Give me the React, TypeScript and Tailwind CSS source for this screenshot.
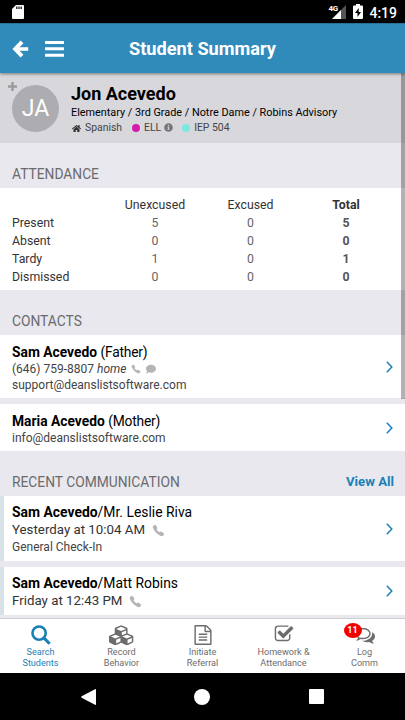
import { ReactNode } from "react"
import { FaComment, FaHome, FaInfoCircle } from "react-icons/fa"
import { IoCall } from "react-icons/io5"

interface Row {
    label: string
    unexcused: number
    excused: number
    total: number
}

const attendance: Row[] = [
    { label: "Present", unexcused: 5, excused: 0, total: 5 },
    { label: "Absent", unexcused: 0, excused: 0, total: 0 },
    { label: "Tardy", unexcused: 1, excused: 0, total: 1 },
    { label: "Dismissed", unexcused: 0, excused: 0, total: 0 },
]

function Chevron() {
    return (
        <svg className="h-3 w-[7px] shrink-0" viewBox="0 0 7 12" fill="none" stroke="#1a81b8" strokeWidth="1.5">
            <path d="M.8 .8 5.8 6 .8 11.2" />
        </svg>
    )
}

function StatusBar() {
    return (
        <div className="flex h-[23px] items-center bg-black pr-[8px] pl-[12px] text-white">
            <svg className="mt-px h-[14px] w-3" viewBox="0 0 12 14">
                <path d="M4 0h7q1 0 1 1v12q0 1-1 1H1q-1 0-1-1V4z" fill="#fff" />
                <path d="M4.8 1.5v2.6M7 1.5v2.6M9.2 1.5v2.6" stroke="#000" strokeWidth="1.2" />
            </svg>
            <div className="ml-auto flex items-center">
                <div className="relative mt-[1px] h-[14px] w-[18px]">
                    <svg className="h-full w-full" viewBox="0 0 18 14">
                        <path d="M18 0V14H4z" fill="#555" />
                        <path d="M13 5V14H4z" fill="#fff" />
                    </svg>
                    <span className="absolute top-0 left-0 bg-black text-[8px] leading-[7px] font-bold tracking-[-0.3px]">4G</span>
                </div>
                <svg className="ml-[7px] h-[15px] w-[10px]" viewBox="0 0 10 15">
                    <path d="M3 0h4v1.5h2q1 0 1 1V14q0 1-1 1H1q-1 0-1-1V2.5q0-1 1-1h2z" fill="#fff" />
                    <path d="M5.7 4 2 9h2.5v4L8 8H5.7z" fill="#000" />
                </svg>
                <span className="mt-[2px] ml-[6px] text-[14px] leading-none font-medium">4:19</span>
            </div>
        </div>
    )
}

function Header() {
    return (
        <div className="relative z-10 grid h-[50px] grid-cols-[1fr_auto_1fr] items-center border-t border-[#2c6f98] bg-[#318bba] px-[12px] text-white shadow-[0_1px_3px_rgba(0,0,0,0.45)]">
            <div className="flex items-center gap-[16px]">
                <svg className="h-[18px] w-[17px]" viewBox="0 0 17 18" fill="none" stroke="#fff" strokeWidth="4">
                    <path d="M4 9H16.2" strokeWidth="3.6" />
                    <path d="M10 1.8 3.2 9l6.8 7.2" />
                </svg>
                <svg className="h-4 w-[19px]" viewBox="0 0 19 16" fill="#fff">
                    <rect width="19" height="3" y="0" rx=".5" />
                    <rect width="19" height="3" y="6.3" rx=".5" />
                    <rect width="19" height="3" y="12.7" rx=".5" />
                </svg>
            </div>
            <h1 className="text-[18.2px] font-bold">Student Summary</h1>
        </div>
    )
}

function Profile() {
    return (
        <div className="flex h-[70px] bg-[#d8d7dc] pt-[12px] pl-[12px]">
            <div className="relative flex h-[47px] w-[47px] items-center justify-center rounded-full bg-[#adacb0] pt-[2px] text-[23px] text-white">
                JA
                <svg className="absolute -top-[3px] -left-[4px] h-[9px] w-[9px]" viewBox="0 0 9 9" stroke="#9b9b9d" strokeWidth="2.4">
                    <path d="M4.5 0v9M0 4.5h9" />
                </svg>
            </div>
            <div className="-mt-[3px] ml-[12px] text-black">
                <div className="text-[18px] leading-[24px] font-bold">Jon Acevedo</div>
                <div className="-mt-px text-[10.85px] leading-[15px]">Elementary / 3rd Grade / Notre Dame / Robins Advisory</div>
                <div className="flex items-center text-[10.4px] leading-[16px] text-[#444]">
                    <FaHome className="mr-[4px] ml-[1px] text-[#333]" size={9} />
                    <span>Spanish</span>
                    <span className="mr-[4px] ml-[10px] h-2 w-2 rounded-full bg-[#d81bb0]" />
                    <span>ELL</span>
                    <FaInfoCircle className="mb-px ml-[3px] text-[#777]" size={9} />
                    <span className="mr-[4px] ml-[9px] h-2 w-2 rounded-full bg-[#76ebe0]" />
                    <span>IEP 504</span>
                </div>
            </div>
        </div>
    )
}

function SectionTitle({ title, children }: { title: string; children?: ReactNode }) {
    return (
        <div className="flex h-[45px] items-end justify-between bg-[#e9e8ee] pr-[11px] pb-[5px] pl-[12px] text-[13.2px] leading-[19px] text-[#6b6b6d]">
            <h2 className="-mb-px text-[13.8px]">{title}</h2>
            {children}
        </div>
    )
}

function Attendance() {
    return (
        <div className="h-[102px] bg-white pt-[8px] pl-[12px] text-[12.3px] leading-[18px] text-[#333]">
            <div className="grid grid-cols-[95px_96px_95px_96px] text-center">
                <span />
                <span>Unexcused</span>
                <span>Excused</span>
                <span className="font-bold">Total</span>
            </div>
            {attendance.map((row) => (
                <div key={row.label} className="grid grid-cols-[95px_96px_95px_96px] text-center">
                    <span className="text-left">{row.label}</span>
                    <span className="text-[#666]">{row.unexcused}</span>
                    <span className="text-[#666]">{row.excused}</span>
                    <span className="font-bold text-[#555]">{row.total}</span>
                </div>
            ))}
        </div>
    )
}

function Card({ className, children }: { className: string; children: ReactNode }) {
    return (
        <div className={`flex items-center justify-between bg-white pr-[12px] ${className}`}>
            <div className="self-start pt-[7px]">{children}</div>
            <Chevron />
        </div>
    )
}

function CommCard({ className, to, date, note }: { className: string; to: string; date: string; note?: string }) {
    return (
        <Card className={`border-l-4 border-[#d6e2e5] pl-2 ${className}`}>
            <div className="text-[13.9px] leading-[18px] text-black"><b>Sam Acevedo</b>/{to}</div>
            <div className="flex items-center text-[13.3px] leading-[18px] text-[#333]">
                {date}
                <IoCall className="ml-[7px] text-[#b5b5b5]" size={13} />
            </div>
            {note && <div className="text-[12px] leading-[17px] text-[#444]">{note}</div>}
        </Card>
    )
}

function Tab({ icon, lines, active }: { icon: ReactNode; lines: [string, string]; active?: boolean }) {
    return (
        <div className={`flex flex-1 flex-col items-center pt-[4px] ${active ? "text-[#1a81b8]" : "text-[#6c6c6c]"}`}>
            <div className="relative flex h-[24px] items-center">{icon}</div>
            <div className="text-center text-[9.1px] leading-[10.5px]">
                {lines[0]}<br />{lines[1]}
            </div>
        </div>
    )
}

function Tabs() {
    return (
        <div className="flex h-[55px] border-t border-[#cfcfd1] bg-white">
            <Tab
                active
                lines={["Search", "Students"]}
                icon={
                    <svg className="h-[20px] w-[20px]" viewBox="0 0 19 19" fill="none" stroke="currentColor">
                        <circle cx="7.7" cy="7.7" r="6.3" strokeWidth="2.5" />
                        <path d="m12 12 5.7 5.8" strokeWidth="3" />
                    </svg>
                }
            />
            <Tab
                lines={["Record", "Behavior"]}
                icon={
                    <svg className="h-[20px] w-[25px]" viewBox="0 0 2112 1792" fill="currentColor">
                        <path d="M576 1665l384-192v-314l-384 164v342zm-64-454l404-173-404-173-404 173zm1088 454l384-192v-314l-384 164v342zm-64-454l404-173-404-173-404 173zm-448-293l384-165v-266l-384 164v267zm-64-379l441-189-441-189-441 189zm1088 518v416q0 36-19 67t-52 47l-448 224q-25 14-57 14t-57-14l-448-224q-5-2-7-4-2 2-7 4l-448 224q-25 14-57 14t-57-14l-448-224q-33-16-52-47t-19-67v-416q0-38 21.5-70t56.5-48l434-186v-400q0-38 21.5-70t56.5-48l448-192q23-10 50-10t50 10l448 192q35 16 56.5 48t21.5 70v400l434 186q36 16 57 48t21 70z" />
                    </svg>
                }
            />
            <Tab
                lines={["Initiate", "Referral"]}
                icon={
                    <svg className="h-[20px] w-[20px]" viewBox="0 0 1792 1792" fill="currentColor">
                        <path d="M1596 380q28 28 48 76t20 88v1152q0 40-28 68t-68 28h-1344q-40 0-68-28t-28-68v-1600q0-40 28-68t68-28h896q40 0 88 20t76 48zm-444-244v376h376q-10-29-22-41l-313-313q-12-12-41-22zm384 1528v-1024h-416q-40 0-68-28t-28-68v-416h-768v1536h1280zm-1024-864q0-14 9-23t23-9h704q14 0 23 9t9 23v64q0 14-9 23t-23 9h-704q-14 0-23-9t-9-23v-64zm736 224q14 0 23 9t9 23v64q0 14-9 23t-23 9h-704q-14 0-23-9t-9-23v-64q0-14 9-23t23-9h704zm0 256q14 0 23 9t9 23v64q0 14-9 23t-23 9h-704q-14 0-23-9t-9-23v-64q0-14 9-23t23-9h704z" />
                    </svg>
                }
            />
            <Tab
                lines={["Homework &", "Attendance"]}
                icon={
                    <svg className="-mt-[2px] h-[20px] w-[20px]" viewBox="0 0 1792 1792" fill="currentColor">
                        <path d="M1472 930v318q0 119-84.5 203.5t-203.5 84.5h-832q-119 0-203.5-84.5t-84.5-203.5v-832q0-119 84.5-203.5t203.5-84.5h832q63 0 117 25 15 7 18 23 3 17-9 29l-49 49q-10 10-23 10-3 0-9-2-23-6-45-6h-832q-66 0-113 47t-47 113v832q0 66 47 113t113 47h832q66 0 113-47t47-113v-254q0-13 9-22l64-64q10-10 23-10 6 0 12 3 20 8 20 29zm231-489l-814 814q-24 24-57 24t-57-24l-430-430q-24-24-24-57t24-57l110-110q24-24 57-24t57 24l263 263 647-647q24-24 57-24t57 24l110 110q24 24 24 57t-24 57z" />
                    </svg>
                }
            />
            <Tab
                lines={["Log", "Comm"]}
                icon={
                    <>
                        <svg className="h-[20px] w-[20px]" viewBox="0 0 1792 1792" fill="currentColor">
                            <path d="M704 384q-153 0-286 52t-211.5 141-78.5 191q0 82 53 158t149 132l97 56-35 84q34-20 62-39l44-31 53 10q78 14 153 14 153 0 286-52t211.5-141 78.5-191-78.5-191-211.5-141-286-52zm0-128q191 0 353.5 68.5t256.5 186.5 94 257-94 257-256.5 186.5-353.5 68.5q-86 0-176-16-124 88-278 128-36 9-86 16h-3q-11 0-20.5-8t-11.5-21q-1-3 1-13l9-16 16-20q5-6 23-25t26-29.5 22.5-29 25-38.5 20.5-44q-124-72-195-177t-71-224q0-139 94-257t256.5-186.5 353.5-68.5zm822 1169q10 24 20.5 44t25 38.5 22.5 29 26 29.5 23 25q1 1 4 4.5t4.5 5 4 5 3.5 5.5l2.5 5 2 6 .5 6.5-1 6.5q-3 14-13 22t-22 7q-50-7-86-16-154-40-278-128-90 16-176 16-271 0-472-132 58 4 88 4 161 0 309-45t264-129q125-92 192-212t67-254q0-77-23-152 129 71 204 178t75 230q0 120-71 224.5t-195 176.5z" />
                        </svg>
                        <span className="absolute top-0 -left-[11px] flex h-[15px] w-[18px] items-center justify-center rounded-[50%] bg-[#f50000] pt-px text-[9px] font-bold text-white">11</span>
                    </>
                }
            />
        </div>
    )
}

function App() {
    return (
        <div className="flex h-[720px] w-[405px] flex-col overflow-hidden bg-[#e9e8ee] font-['Roboto',sans-serif]">
            <StatusBar />
            <Header />
            <div className="relative h-[545px] overflow-hidden">
                <Profile />
                <SectionTitle title="ATTENDANCE" />
                <Attendance />
                <SectionTitle title="CONTACTS" />
                <Card className="h-[63px] pl-[12px]">
                    <div className="pt-px text-[13.8px] leading-[18px] text-black"><b>Sam Acevedo</b> <span className="tracking-[-0.2px]">(Father)</span></div>
                    <div className="flex items-center text-[12px] leading-[16px] text-[#444]">
                        (646) 759-8807&nbsp;<i>home</i>
                        <IoCall className="ml-[5px] text-[#b5b5b5]" size={10} />
                        <FaComment className="ml-[5px] text-[#b5b5b5]" size={10} />
                    </div>
                    <div className="text-[12px] leading-[17px] text-[#444]">support@deanslistsoftware.com</div>
                </Card>
                <Card className="mt-[6px] h-[47px] pl-[12px]">
                    <div className="pt-px text-[13.8px] leading-[18px] text-black"><b>Maria Acevedo</b> <span className="tracking-[-0.2px]">(Mother)</span></div>
                    <div className="text-[12px] leading-[17px] text-[#444]">info@deanslistsoftware.com</div>
                </Card>
                <SectionTitle title="RECENT COMMUNICATION">
                    <span className="font-bold text-[#1a81b8]">View All</span>
                </SectionTitle>
                <CommCard className="h-[65px]" to="Mr. Leslie Riva" date="Yesterday at 10:04 AM" note="General Check-In" />
                <CommCard className="mt-[6px] h-[48px]" to="Matt Robins" date="Friday at 12:43 PM" />
                {/* scroll indicator */}
                <div className="absolute top-0 right-0 h-[326px] w-1 bg-black/30" />
            </div>
            <Tabs />
            <div className="flex h-[47px] items-center bg-black">
                <svg className="ml-[81px] h-4 w-[15px]" viewBox="0 0 15 16" fill="#fff"><path d="M14 .2q1-.4 1 .8v14q0 1.2-1 .8L.6 8.7Q-.2 8 .6 7.3z" /></svg>
                <span className="ml-[98px] h-4 w-4 rounded-full bg-white" />
                <span className="ml-[99px] h-[15px] w-[15px] rounded-[1px] bg-white" />
            </div>
        </div>
    )
}

export default App
